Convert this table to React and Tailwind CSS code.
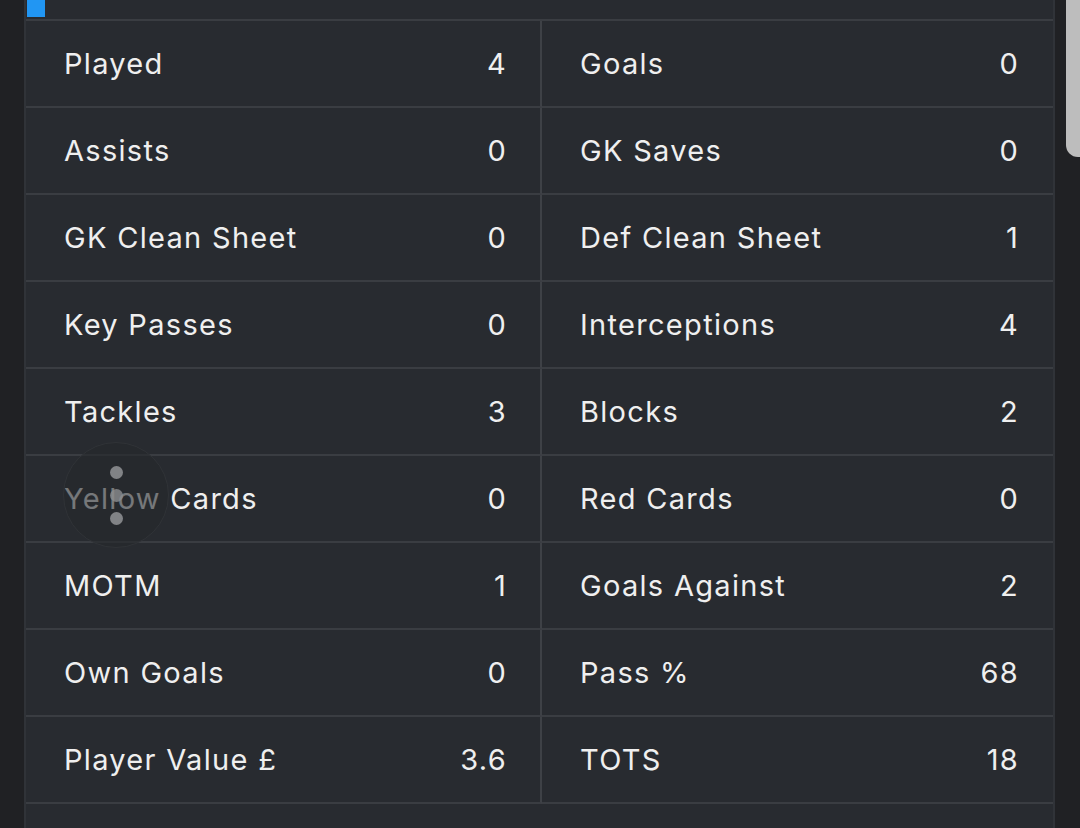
import { useState } from 'react';

const rows = [
  ['Played', '4', 'Goals', '0'],
  ['Assists', '0', 'GK Saves', '0'],
  ['GK Clean Sheet', '0', 'Def Clean Sheet', '1'],
  ['Key Passes', '0', 'Interceptions', '4'],
  ['Tackles', '3', 'Blocks', '2'],
  ['Yellow Cards', '0', 'Red Cards', '0'],
  ['MOTM', '1', 'Goals Against', '2'],
  ['Own Goals', '0', 'Pass %', '68'],
  ['Player Value £', '3.6', 'TOTS', '18'],
];

function StatCell({ label, value, left }) {
  return (
    <div
      className={
        'h-[87px] flex items-center justify-between border-b-2 border-[#3a3d42] pl-[38px] ' +
        (left ? 'pr-[33px] border-r-2 border-r-[#3e4146]' : 'pr-[34px]')
      }
    >
      <span>{label}</span>
      <span>{value}</span>
    </div>
  );
}

export default function App() {
  const [menuOpen, setMenuOpen] = useState(false);

  return (
    <div
      className="flex h-[828px] w-[1080px] overflow-hidden bg-[#202124] text-[#efefef] text-[29px] tracking-[0.045em]"
      style={{ fontFamily: 'Inter, "Noto Sans", sans-serif' }}
    >
      <div className="w-[24px] shrink-0" />

      {/* Stats panel */}
      <div className="relative w-[1031px] shrink-0 bg-[#282b30] border-x-2 border-[#303338]">
        <div className="h-[21px] border-b-2 border-[#3a3d42]">
          <div className="ml-[1px] w-[18px] h-[17px] bg-[#2196f3]" />
        </div>

        <div className="grid grid-cols-[516px_1fr]">
          {rows.map(([l1, v1, l2, v2]) => (
            <div key={l1} className="contents">
              <StatCell label={l1} value={v1} left />
              <StatCell label={l2} value={v2} />
            </div>
          ))}
        </div>

        {/* floating menu button */}
        <button
          onClick={() => setMenuOpen(!menuOpen)}
          className="absolute left-[37px] top-[442px] w-[106px] h-[106px] rounded-full bg-[#25282c]/60 border border-[#303337] flex flex-col items-center justify-center gap-[10px]"
        >
          <span className="w-[13px] h-[13px] rounded-full bg-[#8c8d90]/90" />
          <span className="w-[13px] h-[13px] rounded-full bg-[#8c8d90]/80" />
          <span className="w-[13px] h-[13px] rounded-full bg-[#8c8d90]/90" />
        </button>
      </div>

      {/* right gutter with scroll thumb */}
      <div className="flex-1 flex justify-end">
        <div className="w-[14px] h-[157px] bg-[#bdbdbd] rounded-bl-[12px]" />
      </div>
    </div>
  );
}
